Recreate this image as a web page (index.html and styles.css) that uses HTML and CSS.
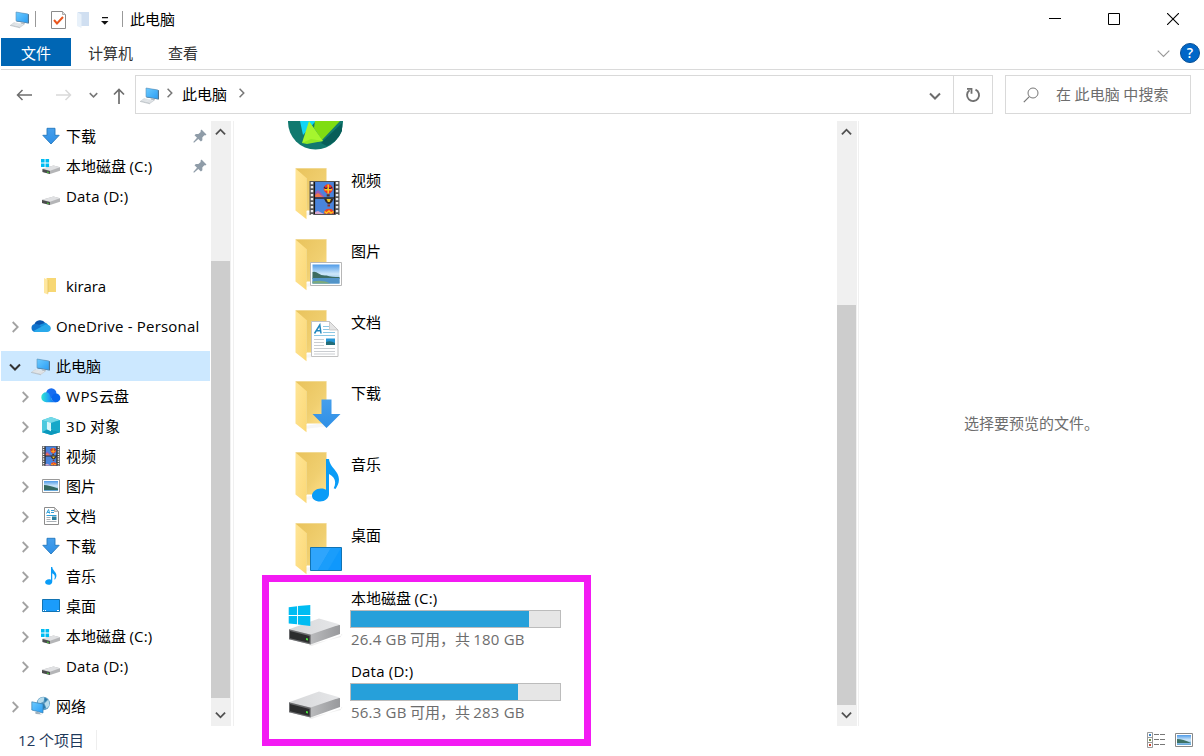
FILE: index.html
```html
<!DOCTYPE html>
<html lang="zh-CN">
<head>
<meta charset="utf-8">
<title>此电脑</title>
<link rel="stylesheet" href="styles.css">
</head>
<body>
<svg class="defs" width="0" height="0" aria-hidden="true">
  <defs>
    <linearGradient id="gScreen" x1="0" y1="0" x2="1" y2="1"><stop offset="0" stop-color="#6ccbff"/><stop offset="1" stop-color="#2a9df4"/></linearGradient>
    <linearGradient id="gFolderBack" x1="0" y1="0" x2="1" y2="1"><stop offset="0" stop-color="#e9c35c"/><stop offset=".6" stop-color="#f0cf70"/><stop offset="1" stop-color="#ffe08a"/></linearGradient>
    <linearGradient id="gFolderFront" x1="0" y1="0" x2="1" y2="1"><stop offset="0" stop-color="#ffe596"/><stop offset="1" stop-color="#fbd876"/></linearGradient>
    <linearGradient id="gArrow" x1="0" y1="0" x2="0" y2="1"><stop offset="0" stop-color="#459fec"/><stop offset="1" stop-color="#2f8fe6"/></linearGradient>
    <linearGradient id="gCloud" x1="0" y1="0" x2="1" y2="0"><stop offset="0" stop-color="#2fe6d0"/><stop offset=".5" stop-color="#1ea5f5"/><stop offset="1" stop-color="#0b5be8"/></linearGradient>
    <linearGradient id="gSky" x1="0" y1="0" x2="0" y2="1"><stop offset="0" stop-color="#4f9be8"/><stop offset=".5" stop-color="#cfe8fa"/><stop offset="1" stop-color="#5ea3d6"/></linearGradient>
    <linearGradient id="gDriveTop" x1="0" y1="0" x2="1" y2="0"><stop offset="0" stop-color="#d6d7d9"/><stop offset="1" stop-color="#e6e7e9"/></linearGradient>
    <linearGradient id="gDriveSide" x1="0" y1="0" x2="1" y2="0"><stop offset="0" stop-color="#c0c1c3"/><stop offset=".45" stop-color="#b8b9bb"/><stop offset="1" stop-color="#98999c"/></linearGradient>
  </defs>
  <symbol id="pc" viewBox="0 0 20 20">
    <path d="M6.500 3.500l12.500 1.800v9.300L6.500 12.500z" fill="#4b6c86"/>
    <path d="M6 3l12 2v9L6 11.800z" fill="url(#gScreen)" stroke="#5c90b8" stroke-width=".6"/>
    <path d="M11.500 13.200l3.500.7-1 2.200-3.500-.8z" fill="#b6bdc3"/>
    <path d="M4 13.200l10.500 2.300-4.500 3.200L0 16.300z" fill="#cfd4d8"/>
    <path d="M3.500 14.600l8 1.800M5 13.800l8 1.800M2.300 15.500l8 1.800" stroke="#f3f5f6" stroke-width=".6"/>
    <path d="M0 16.400l10 2.400" stroke="#aab0b5" stroke-width=".6"/>
  </symbol>
  <symbol id="arrow-down" viewBox="0 0 20 20"><path d="M6 2.300h8v7h4.200L10 18 1.800 9.300H6z" fill="url(#gArrow)" stroke="#2478bd" stroke-width=".9"/></symbol>
  <symbol id="drive" viewBox="0 0 20 20">
    <path d="M1 10.700L12.500 7.500 19 9.300v3.500L9 16l-8-2z" fill="#b4b5b7"/>
    <path d="M1 10.700L12.500 7.500 19 9.300 9 12.700z" fill="#e0e1e3"/>
    <path d="M1 10.900l8 2V16l-8-2z" fill="#4a4b4c"/>
    <path d="M6.200 13.500l1.500.4v1.200l-1.500-.4z" fill="#45dc35"/>
  </symbol>
  <symbol id="drive-c" viewBox="0 0 20 20">
    <path d="M1.500 12.800L12.500 9.500 19 11.300v3.500L9 18l-7.500-2.100z" fill="#b4b5b7"/>
    <path d="M1.500 12.800L12.500 9.500 19 11.300 9 14.800z" fill="#e0e1e3"/>
    <path d="M1.500 12.900L9 15v3l-7.500-2.100z" fill="#4a4b4c"/>
    <path d="M6.200 15.600l1.500.4v1.200l-1.500-.4z" fill="#45dc35"/>
    <path d="M0 3h3.600v3.500H0zM4.500 3h3.600v3.500H4.500zM0 7.500h3.600V11H0zM4.500 7.500h3.600V11H4.500z" fill="#00bcf2"/>
  </symbol>
  <symbol id="folder-sm" viewBox="0 0 20 20">
    <path d="M5.500 2h9.500v14H5.500z" fill="#f7d774"/><path d="M3 2l4 2v14.500L3 17z" fill="#ffe79f"/><path d="M7 4v13.500" stroke="#d9b858" stroke-width=".6"/>
  </symbol>
  <symbol id="onedrive" viewBox="0 0 20 20">
    <path d="M3.300 8.500a6.200 6.200 0 0 1 11-1.500L10 11z" fill="#0a55ad"/>
    <path d="M4 15.900A4 4 0 0 1 3.800 8c1.800-.3 3.100.2 4.500 1l6 6.900z" fill="#0f73cd"/>
    <path d="M8 9l6.300-2.300A5 5 0 0 1 17 8.500l-5 4z" fill="#1590df"/>
    <path d="M2.500 14.900L14.500 8.500c3 0 5.300 1.400 5.300 3.900 0 2-1.600 3.500-3.600 3.500H4.500c-.9 0-1.500-.4-2-1z" fill="#29a9eb"/>
  </symbol>
  <symbol id="cloud" viewBox="0 0 20 20">
    <circle cx="10.300" cy="7.500" r="5.200" fill="#176df0"/><circle cx="15" cy="11.900" r="4.300" fill="#0866ed"/>
    <path d="M5.300 6.200a4.900 4.900 0 1 0 0 10H15c-3.500-.8-4.700-3.300-6-6.700C8.200 7.300 7 6.200 5.300 6.200z" fill="url(#gCloud)"/>
  </symbol>
  <symbol id="cube" viewBox="0 0 20 20">
    <path d="M0 3.500L10 0l10 3.500V17l-10 3-10-3z" fill="#29bdd8"/>
    <path d="M0 3.500L10 0l10 3.500L10 6.500z" fill="#74d9e8"/><path d="M0 3.500L10 6.500V14L0 17z" fill="#4bc9de"/>
    <path d="M5.500 5.200l4.500 1.300 4.500-1.300v8.800L10 16l-4.500-2z" fill="#d8f6fa"/><path d="M10 6.500l10-3V17l-10-3z" fill="#17a8c9"/>
    <path d="M0 17l5.500-3L10 16v4zM20 17l-10-3v6z" fill="#0b98bc"/>
  </symbol>
  <symbol id="film" viewBox="0 0 30 34">
    <path d="M0 0h30v34H0z" fill="#555"/><path d="M5.500 1h19v15.500h-19zM5.500 17.500h19V33h-19z" fill="#4a84dc"/>
    <path d="M2.500 1v33M27.500 1v33" stroke="#eee" stroke-width="2.500" stroke-dasharray="2.200 1.800"/>
    <path d="M5.500 12q3-5 5-1l4 4v1.500h-9z" fill="#9b5fb3"/><path d="M5.500 14l3-2 5 4h-8z" fill="#f0764c"/>
    <path d="M5 1v32M25 1v32M5 17h20" stroke="#171717" stroke-width="1.200"/>
    <path d="M14 8a4.700 4.700 0 0 1 9.400 0q0 2-3 4.500h-3.200Q14 10 14 8z" fill="#ef3328"/><path d="M14.500 6l2 2 2-2 2 2 2-2" fill="none" stroke="#3b2840" stroke-width="1.100"/><path d="M15 8.800h7.400M18.700 3.500v9" stroke="#ffc61a" stroke-width="1.500"/><path d="M17.200 13.300h3v2.200h-3z" fill="#5b3422"/>
    <path d="M14.500 17.700h9.500q-1 3.500-3.500 5h-2.200q-2.500-1.500-3.800-5z" fill="#38281f"/><path d="M17 18h4.500l-1.300 3h-1.800z" fill="#f3c829"/><path d="M18 23.500h2.500v2H18z" fill="#8d2f27"/>
    <path d="M14.500 32.800q0-5 5-5t5 5z" fill="#ed4427"/><path d="M15 30.500l2 1.500 2.500-2 2 2 2.500-1.500" fill="none" stroke="#ffc61a" stroke-width="1.400"/><path d="M5.500 31l3-1 6 3h-9z" fill="#d5a7cf"/>
  </symbol>
  <symbol id="picture" viewBox="0 0 32 24">
    <path d="M.5.500h31v23H.5z" fill="#fff" stroke="#b7b7b7"/><path d="M2.500 2.500h27v19h-27z" fill="url(#gSky)"/>
    <path d="M2.500 10q3-1 6 1.500t8 2q5 1.500 13 1.500v2h-27z" fill="#3d6c62"/><path d="M2.500 16q8 0 14 0t13 0v5.500h-27z" fill="#5294c8"/><path d="M2.500 19.500q11-2 18 2h-18z" fill="#7caa7d"/>
  </symbol>
  <symbol id="doc" viewBox="0 0 28 36">
    <path d="M.5.500h18L27 9v26.500H.5z" fill="#fff" stroke="#c2c2c2"/><path d="M18.500.500V9H27z" fill="#e5e5e5" stroke="#bbb" stroke-width=".7"/>
    <path d="M3.500 12.500L8.800 4l1.200 8.500M5.500 9.800h4.600" fill="none" stroke="#2187bd" stroke-width="1.500"/>
    <path d="M12 5.500h6M12 8.500h6M12 11.500h12M3 14.500h21" stroke="#8cc8e4" stroke-width="1"/><path d="M3 18.500h10M3 21.500h10M3 24.500h10M3 27.500h21M3 30.500h21M3 33h21" stroke="#cacdd1" stroke-width="1"/>
    <path d="M15 17.500h9V24h-9z" fill="#2596d6"/><path d="M15 21q4-2 9 1v2h-9z" fill="#246d79"/>
  </symbol>
  <symbol id="doc-sm" viewBox="0 0 15 18">
    <path d="M.5.500h10l4 4v13H.5z" fill="#fff" stroke="#8c8c8c"/><path d="M10.500.500v4h4z" fill="#ddd" stroke="#999" stroke-width=".7"/>
    <path d="M2.500 6.500L4.600 2.500l1 4M3.300 5.500h2.500M7 3.500h3M7 5.500h3M2.500 8.500h10" fill="none" stroke="#2f9fd8"/>
    <path d="M2.500 10.500h4M2.500 12.500h4M2.500 14.500h10" stroke="#aab0b5"/><path d="M8 9.500h4.500V13H8z" fill="#2b7f9f"/>
  </symbol>
  <symbol id="note" viewBox="0 0 28 43">
    <path d="M14 0h3c.5 6 5 9 8 14 4 7 1 12-1.500 16l-1.800-.8c3-6 1.300-11.200-4.700-14.200V35c0 4-4 7.500-9 7.500S0 40 0 36.500 4 29.500 9 29.500c2 0 3.500.3 5 1.200z" fill="#0a9cf7"/>
  </symbol>
  <symbol id="desktop" viewBox="0 0 32 24">
    <path d="M.5.500h31v23H.5z" fill="#0f98fc" stroke="#1173b3"/><path d="M1 1h20L8 23H1z" fill="#2fa5fc"/><path d="M21 1h10L18 23H8z" fill="#1a9dfb"/>
  </symbol>
  <symbol id="network" viewBox="0 0 20 20">
    <circle cx="12.300" cy="7.500" r="6.700" fill="#5f9cc2"/><path d="M7.500 3.500q3-3 6-2l-1 4-4 2-2-1zM13.500 7.500l4-4 1 6-3 3z" fill="#b8dcec"/><path d="M13.500 1.500l3 2-3 3zM8.500 8.500l4-1 2 4-3 2z" fill="#2b7cad"/>
    <path d="M.8 5.800L12 8v9L.8 14z" fill="url(#gScreen)" stroke="#3a7fb0" stroke-width=".7"/><path d="M5 15.400l4 1v1l2 1-6-.5-1-1z" fill="#9fb1be"/>
  </symbol>
  <symbol id="folder-lg" viewBox="0 0 56 56">
    <path d="M37 46l5 3-26 3v-3z" fill="#eee" opacity=".5"/>
    <path d="M8 4.500h30.500v42H17L8 40z" fill="url(#gFolderBack)"/>
    <path d="M7.500 4.500L18.500 14v41.300L7.500 46.500z" fill="url(#gFolderFront)"/><path d="M18.500 14v33" stroke="#f3da8d" stroke-width=".8"/><path d="M7.500 4.500h31" stroke="#efd27d" stroke-width=".6"/>
  </symbol>
  <symbol id="drive-lg" viewBox="0 0 56 56">
    <path d="M20 45l33-8v-3l1.500 1-31 11z" fill="#ddd" opacity=".5"/>
    <path d="M1 29.500v9.700L22.500 44.500 52 34V25z" fill="url(#gDriveSide)"/>
    <path d="M1 29.300L31 18.500l21 6-29.300 10z" fill="url(#gDriveTop)"/>
    <path d="M1 29.300l21.700 5.500v9.700L1 39.200z" fill="#6a6b6d"/><path d="M2 31l19.500 5v7L2 38.300z" fill="#2c2d2e"/>
    <path d="M18 38l2 .5v2.100l-2-.5z" fill="#4be33d"/>
  </symbol>
  <symbol id="chev-r" viewBox="0 0 8 12"><path d="M1.700 1l5 5-5 5" fill="none" stroke="currentColor" stroke-width="1.800"/></symbol>
  <symbol id="chev-d" viewBox="0 0 12 8"><path d="M1 1.500l5 5 5-5" fill="none" stroke="currentColor" stroke-width="2"/></symbol>
  <symbol id="pin" viewBox="0 0 14 14"><path d="M8.500.5l5 5-1.300.9-.9-.2-2 2.300.1 2.700-1.500 1.300-2.600-2.500L1 13.700l-.7-.7L4 8.800 1.500 6.200l1.400-1.300 2.500.2L7.700 3l-.2-1.200z" fill="#8f9ca8"/></symbol>
</svg>

<div class="window">
  <header class="titlebar">
    <svg class="ic20 t-pc"><use href="#pc"/></svg>
    <i class="vline"></i>
    <svg class="t-check" width="15" height="18" viewBox="0 0 15 18"><path d="M.5.500h11l3 3v14H.5z" fill="#fff" stroke="#8b8b8b"/><path d="M11.500.500v3h3" fill="#ddd" stroke="#999" stroke-width=".8"/><path d="M3 9l3 3.500L12 6" fill="none" stroke="#e9561e" stroke-width="2"/></svg>
    <svg class="t-folder" width="13" height="17" viewBox="0 0 13 17"><path d="M1 1h11v14H1z" fill="#d0dff1"/><path d="M0 1l4.500 2.500V17L0 15z" fill="#e8f1fa"/></svg>
    <svg class="t-drop" width="8" height="8" viewBox="0 0 8 8"><path d="M1 0h6v1.200H1zM0 4h7.500L3.800 7.800z" fill="#111"/></svg>
    <i class="vline"></i>
    <span class="title">此电脑</span>
    <div class="controls">
      <svg width="12" height="12"><path d="M0 5.500h12" stroke="#000"/></svg>
      <svg width="12" height="12"><path d="M.5.500h11v11H.5z" fill="none" stroke="#000"/></svg>
      <svg width="12" height="12"><path d="M0 0l12 12M12 0L0 12" stroke="#000" stroke-width="1.100"/></svg>
    </div>
  </header>

  <nav class="ribbon">
    <span class="tab active">文件</span><span class="tab computer">计算机</span><span class="tab view">查看</span>
    <div class="ribbon-end">
      <svg width="13" height="8"><path d="M.7.700l5.800 5.800L12.300.7" fill="none" stroke="#999" stroke-width="1.100"/></svg>
      <span class="help">?</span>
    </div>
  </nav>

  <div class="navbar">
    <div class="nav-buttons">
      <svg width="16" height="12"><path d="M6.500 1L1.500 6l5 5M1.500 6H16" fill="none" stroke="#6e6e6e" stroke-width="1.500"/></svg>
      <svg class="nb-fwd" width="16" height="12"><path d="M9.500 1l5 5-5 5M14.500 6H0" fill="none" stroke="#d9d9d9" stroke-width="1.500"/></svg>
      <svg class="nb-recent" width="9" height="6" viewBox="0 0 12 8"><use href="#chev-d"/></svg>
      <svg class="nb-up" width="12" height="16"><path d="M1 6.500l5-5 5 5M6 1.500V16" fill="none" stroke="#6e6e6e" stroke-width="1.700"/></svg>
    </div>
    <div class="address">
      <svg class="ic20"><use href="#pc"/></svg>
      <svg class="crumb" width="7" height="10"><use href="#chev-r"/></svg>
      <span>此电脑</span>
      <svg class="crumb" width="7" height="10"><use href="#chev-r"/></svg>
      <svg class="drop" width="12" height="8"><use href="#chev-d"/></svg>
      <div class="refresh"><svg width="16" height="16" viewBox="0 0 16 16"><path d="M4.600 3.200A6 6 0 1 0 10.500 2.600" fill="none" stroke="#707070" stroke-width="1.900"/><path d="M2 1.800h4.500v5" fill="none" stroke="#707070" stroke-width="1.800"/></svg></div>
    </div>
    <div class="search">
      <svg width="16" height="16"><circle cx="10" cy="6" r="5" fill="none" stroke="#777"/><path d="M6.300 9.700L.8 15.200" stroke="#777" stroke-width="1.200"/></svg>
      <span>在 此电脑 中搜索</span>
    </div>
  </div>

  <main class="content">
    <aside class="tree">
      <div class="row child"><svg class="chev none"></svg><svg class="ic20"><use href="#arrow-down"/></svg><span>下载</span><svg class="pin"><use href="#pin"/></svg></div>
      <div class="row child"><svg class="chev none"></svg><svg class="ic20"><use href="#drive-c"/></svg><span>本地磁盘 <b class="lat">(C:)</b></span><svg class="pin"><use href="#pin"/></svg></div>
      <div class="row child"><svg class="chev none"></svg><svg class="ic20 low"><use href="#drive"/></svg><span class="lat">Data (D:)</span></div>
      <div class="row child kirara"><svg class="chev none"></svg><svg class="ic20"><use href="#folder-sm"/></svg><span class="lat tight">kirara</span></div>
      <div class="row gap"><svg class="chev"><use href="#chev-r"/></svg><svg class="ic20"><use href="#onedrive"/></svg><span class="lat">OneDrive - Personal</span></div>
      <div class="row gap selected"><svg class="chev open"><use href="#chev-d"/></svg><svg class="ic20"><use href="#pc"/></svg><span>此电脑</span></div>
      <div class="row child"><svg class="chev"><use href="#chev-r"/></svg><svg class="ic20"><use href="#cloud"/></svg><span><b class="lat wide">WPS</b>云盘</span></div>
      <div class="row child"><svg class="chev"><use href="#chev-r"/></svg><svg class="ic20"><use href="#cube" x="1" y="1" width="18" height="18"/></svg><span><b class="lat wide">3D</b> 对象</span></div>
      <div class="row child"><svg class="chev"><use href="#chev-r"/></svg><svg class="ic20"><use href="#film" width="20" height="20"/></svg><span>视频</span></div>
      <div class="row child"><svg class="chev"><use href="#chev-r"/></svg><svg class="ic20"><path d="M1.500 3.500h17v13h-17z" fill="#fff" stroke="#999"/><path d="M3 5h14v10H3z" fill="url(#gSky)"/><path d="M3 9q5 0 14 3.500V14H3z" fill="#356a62"/></svg><span>图片</span></div>
      <div class="row child"><svg class="chev"><use href="#chev-r"/></svg><svg class="ic20"><use href="#doc-sm" x="3" y="1" width="15" height="18"/></svg><span>文档</span></div>
      <div class="row child"><svg class="chev"><use href="#chev-r"/></svg><svg class="ic20"><use href="#arrow-down"/></svg><span>下载</span></div>
      <div class="row child"><svg class="chev"><use href="#chev-r"/></svg><svg class="ic20"><use href="#note" x="4" y="1" width="12" height="18"/></svg><span>音乐</span></div>
      <div class="row child"><svg class="chev"><use href="#chev-r"/></svg><svg class="ic20"><path d="M1.500 3.500h17v12h-17z" fill="#1b9cfb" stroke="#1173b3"/><path d="M2 14.500h1M4 14.500h1M16 14.500h2" stroke="#fff"/></svg><span>桌面</span></div>
      <div class="row child"><svg class="chev"><use href="#chev-r"/></svg><svg class="ic20"><use href="#drive-c"/></svg><span>本地磁盘 <b class="lat">(C:)</b></span></div>
      <div class="row child"><svg class="chev"><use href="#chev-r"/></svg><svg class="ic20 low"><use href="#drive"/></svg><span class="lat">Data (D:)</span></div>
      <div class="row gap"><svg class="chev"><use href="#chev-r"/></svg><svg class="ic20"><use href="#network"/></svg><span>网络</span></div>
    </aside>
    <div class="scroll tree-scroll"><svg class="up" width="11" height="8"><use href="#chev-d"/></svg><div class="thumb"></div><svg width="11" height="8"><use href="#chev-d"/></svg></div>

    <section class="files">
      <div class="item first"><svg class="ic56"><circle cx="27.500" cy="28" r="27.500" fill="#11796f"/><path d="M12 27h16L15 41z" fill="#10d5f5"/><path d="M33 49l21-20v8q-4 10-15 15z" fill="#075e59"/><path d="M27 27h25L34 46l-8-12z" fill="#7fdd12"/><path d="M21 27l14 20-21 2z" fill="#a6f52e"/><path d="M14 49l9-4 12 2-16 3z" fill="#8fe826"/></svg></div>
      <div class="item"><svg class="ic56"><use href="#folder-lg"/><use href="#film" x="21" y="17" width="31" height="34"/></svg><span>视频</span></div>
      <div class="item"><svg class="ic56"><use href="#folder-lg"/><use href="#picture" x="22" y="27" width="32" height="24"/></svg><span>图片</span></div>
      <div class="item"><svg class="ic56"><use href="#folder-lg"/><use href="#doc" x="23" y="15" width="28" height="36"/></svg><span>文档</span></div>
      <div class="item"><svg class="ic56"><use href="#folder-lg"/><path d="M33.500 22.500h10V37h9L38.500 51 24.500 37h9z" fill="url(#gArrow)"/></svg><span>下载</span></div>
      <div class="item"><svg class="ic56"><use href="#folder-lg"/><use href="#note" x="24" y="11" width="28" height="43"/></svg><span>音乐</span></div>
      <div class="item"><svg class="ic56"><use href="#folder-lg"/><use href="#desktop" x="22" y="28" width="32" height="24"/></svg><span>桌面</span></div>
      <div class="drive">
        <svg class="ic56"><use href="#drive-lg"/><path d="M.7 7.200l8.300-1V15H.7zM9.900 6L22.300 5v10H9.900zM.7 16H9v8.300l-8.300-.7zM9.900 16h12.400v9.900L9.900 24.500z" fill="#00bcf2"/></svg>
        <div class="info"><span>本地磁盘 <b class="lat">(C:)</b></span><div class="bar"><div class="fill" style="width:178px"></div></div><span class="free"><b class="lat">26.4 GB</b> 可用，共 <b class="lat">180 GB</b></span></div>
      </div>
      <div class="drive">
        <svg class="ic56"><use href="#drive-lg"/></svg>
        <div class="info"><span class="lat">Data (D:)</span><div class="bar"><div class="fill" style="width:167px"></div></div><span class="free"><b class="lat">56.3 GB</b> 可用，共 <b class="lat">283 GB</b></span></div>
      </div>
    </section>
    <div class="scroll file-scroll"><svg class="up" width="11" height="8"><use href="#chev-d"/></svg><div class="thumb"></div><svg width="11" height="8"><use href="#chev-d"/></svg></div>
    <section class="preview">选择要预览的文件。</section>
  </main>

  <footer class="status">
    <span class="count"><b class="lat">12</b> 个项目</span>
    <div class="views">
      <svg width="19" height="16"><path d="M.5.500h5v15h-5zM.5 5.500h5M.5 10.500h5" fill="#fff" stroke="#999"/><path d="M2 2h2v2H2z" fill="#3b83c7"/><path d="M2 7h2v2H2z" fill="#718e4a"/><path d="M2 12h2v2H2z" fill="#c4442e"/><path d="M7 2.500h5M13 2.500h5M7 7.500h5M13 7.500h5M7 12.500h5M13 12.500h5" stroke="#777"/></svg>
      <svg width="18" height="14"><path d="M.5.500h17v13H.5z" fill="#fff" stroke="#888"/><path d="M2 2h14v10H2z" fill="url(#gSky)"/><path d="M2 6q6 0 14 4H2z" fill="#3d7165"/></svg>
    </div>
  </footer>
  <div class="highlight"></div>
</div>
</body>
</html>
```

FILE: styles.css
```css
* { box-sizing: border-box; }
body { margin: 0; background: #fff; color: #000; font: 15px/20px "Noto Sans CJK SC", sans-serif; overflow: hidden; }
svg { display: block; flex: none; }
.defs { position: absolute; }
.window { position: relative; width: 1204px; height: 756px; padding-left: 1px; display: flex; flex-direction: column; white-space: nowrap; }
.lat { font-family: "Open Sans", "Noto Sans CJK SC", sans-serif; font-weight: 400; letter-spacing: 0.2px; }
.lat.tight { letter-spacing: -0.1px; }
.lat.wide { letter-spacing: 0.6px; }
.ic20 { width: 20px; height: 20px; }
.ic56 { width: 56px; height: 56px; }

.titlebar { height: 38px; display: flex; align-items: center; padding: 0 25px 0 9px; flex: none; }
.vline { width: 1px; height: 16px; background: #999; margin-left: 5px; }
.t-check { margin: 2px 0 0 15px; }
.t-folder { margin-left: 11px; }
.t-drop { margin: 3px 8px 0 11px; }
.title { margin-left: 7px; }
.controls { margin-left: auto; display: flex; gap: 47px; }

.ribbon { height: 32px; flex: none; display: flex; border-bottom: 1px solid #dadada; }
.tab { width: 70px; height: 28px; line-height: 29px; text-align: center; color: #333; }
.tab.computer { width: 77px; margin-left: 1px; }
.tab.view { margin-left: -1px; }
.tab.active { background: #0066b4; color: #fff; }
.ribbon-end { margin-left: auto; padding: 5px 4px 0 0; display: flex; gap: 10px; }
.ribbon-end svg { margin-top: 7px; }
.help { width: 20px; height: 20px; border-radius: 50%; background: #0067c8; border: 1px solid #084f94; color: #fff; text-align: center; font: 600 14px/18px "Open Sans", sans-serif; }

.navbar { height: 51px; flex: none; display: flex; padding-top: 5px; }
.nav-buttons { width: 134px; height: 39px; display: flex; align-items: center; padding-left: 15px; color: #777; }
.nb-fwd { margin-left: 24px; }
.nb-recent { margin-left: 17px; }
.nb-up { margin-left: 15px; margin-top: 2px; }
.address { width: 858px; height: 39px; border: 1px solid #d9d9d9; display: flex; align-items: center; padding-left: 4px; color: #000; }
.address > span { margin-top: -2px; }
.crumb { color: #777; margin: -3px 9px 0 6px; }
.address span + .crumb { margin-left: 11px; }
.drop { margin: 2px 12px 0 auto; color: #6c6c6c; }
.refresh { width: 39px; height: 37px; border-left: 1px solid #d9d9d9; display: grid; place-items: center; }
.search { width: 186px; height: 39px; margin-left: 12px; border: 1px solid #d9d9d9; display: flex; align-items: center; gap: 17px; padding-left: 17px; color: #6d6d6d; }
.search span { margin-top: -2px; letter-spacing: 0.1px; }

.content { height: 605px; flex: none; display: flex; overflow: hidden; }
.tree { width: 210px; flex: none; padding-right: 1px; }
.row { height: 30px; display: flex; align-items: center; padding-left: 10px; }
.row.child { padding-left: 20px; }
.row.kirara { margin-top: 60px; }
.row.gap { margin-top: 10px; }
.row.selected { background: #cce8ff; }
.row .ic20 { margin: 0 5px 0 12px; }
.row .low { margin-top: 6px; }
.chev { width: 8px; height: 12px; margin-top: 2px; color: #a2a2a2; }
.chev.open { width: 12px; height: 8px; margin: 2px -2px 0; color: #333; }
.chev.none { visibility: hidden; }
.pin { width: 14px; height: 14px; margin-left: auto; margin-right: 3px; }

.scroll { width: 20px; flex: none; background: #f0f0f0; color: #505050; display: flex; flex-direction: column; align-items: flex-start; padding: 7px 0; }
.scroll svg { margin-left: 4px; }
.scroll .up { transform: rotate(180deg); }
.thumb { width: 19px; background: #cdcdcd; }
.tree-scroll .thumb { height: 437px; margin: 125px 0 13px; }
.file-scroll .thumb { height: 400px; margin: 169px 0 6px; }
.files { width: 604px; margin-left: 2px; flex: none; border-left: 1px solid #f0f0f0; padding-left: 54px; }
.item { height: 71px; display: flex; padding-top: 6px; gap: 7px; }
.item.first { height: 37px; padding: 0; align-items: flex-end; }
.item.first svg { margin-bottom: 8px; }
.item span { margin-top: 6px; }
.drive { height: 73px; display: flex; padding-top: 4px; gap: 6px; }
.drive .ic56 { margin-top: 12px; }
.info { display: flex; flex-direction: column; }
.info > span { padding-left: 1px; }
.bar { width: 211px; height: 18px; margin: 2px 0 1px; border: 1px solid #bcbcbc; background: #e6e6e6; flex: none; }
.fill { height: 16px; background: #26a0da; }
.free { color: #6d6d6d; }
.preview { flex: 1; margin-left: 1px; border-left: 1px solid #f0f0f0; display: grid; place-items: center; padding-bottom: 2px; color: #6d6d6d; }

.status { height: 30px; display: flex; align-items: center; justify-content: space-between; padding: 0 11px 2px 17px; color: #1e395b; }
.count { border-right: 1px solid #eee; padding-right: 12px; height: 20px; }
.views { display: flex; align-items: center; gap: 9px; }
.highlight { position: absolute; left: 262px; top: 575px; width: 329px; height: 171px; border: 7px solid #f31af3; }
```
